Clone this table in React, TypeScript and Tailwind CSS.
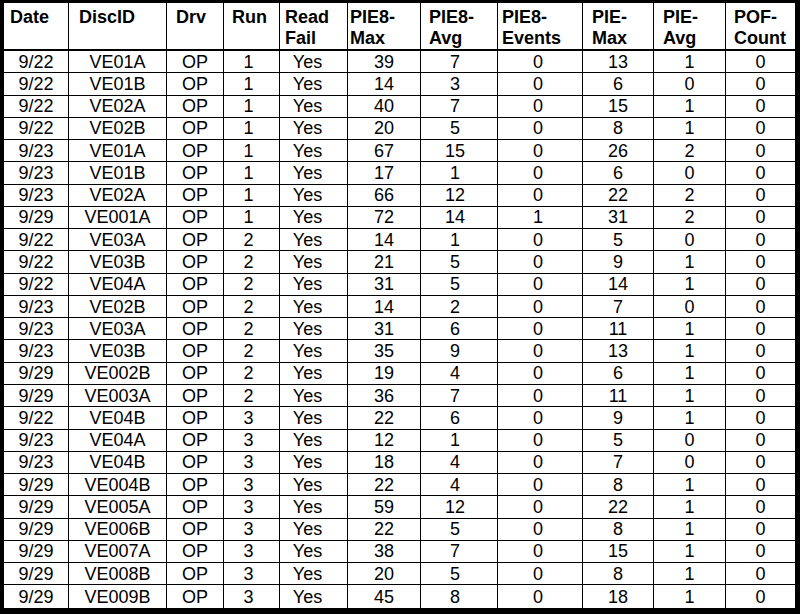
const cols = [
  { w: "w-[65px]", head: "pl-[6px]", cell: "" },
  { w: "w-[98px]", head: "pl-[10px]", cell: "" },
  { w: "w-[57px]", head: "pl-[9px]", cell: "" },
  { w: "w-[56px]", head: "pl-[8px]", cell: "pr-[6px]" },
  { w: "w-[68px]", head: "pl-[5px]", cell: "pr-[12px]" },
  { w: "w-[73px]", head: "pl-[2px]", cell: "" },
  { w: "w-[77px]", head: "pl-[8px]", cell: "pr-[8px]" },
  { w: "w-[85px]", head: "pl-[4px]", cell: "pr-[4px]" },
  { w: "w-[71px]", head: "pl-[9px]", cell: "" },
  { w: "w-[72px]", head: "pl-[9px]", cell: "" },
  { w: "w-[69px]", head: "pl-[8px]", cell: "" },
]

const headers = [
  ["Date"],
  ["DiscID"],
  ["Drv"],
  ["Run"],
  ["Read", "Fail"],
  ["PIE8-", "Max"],
  ["PIE8-", "Avg"],
  ["PIE8-", "Events"],
  ["PIE-", "Max"],
  ["PIE-", "Avg"],
  ["POF-", "Count"],
]

const rows: (string | number)[][] = [
  ["9/22", "VE01A", "OP", 1, "Yes", 39, 7, 0, 13, 1, 0],
  ["9/22", "VE01B", "OP", 1, "Yes", 14, 3, 0, 6, 0, 0],
  ["9/22", "VE02A", "OP", 1, "Yes", 40, 7, 0, 15, 1, 0],
  ["9/22", "VE02B", "OP", 1, "Yes", 20, 5, 0, 8, 1, 0],
  ["9/23", "VE01A", "OP", 1, "Yes", 67, 15, 0, 26, 2, 0],
  ["9/23", "VE01B", "OP", 1, "Yes", 17, 1, 0, 6, 0, 0],
  ["9/23", "VE02A", "OP", 1, "Yes", 66, 12, 0, 22, 2, 0],
  ["9/29", "VE001A", "OP", 1, "Yes", 72, 14, 1, 31, 2, 0],
  ["9/22", "VE03A", "OP", 2, "Yes", 14, 1, 0, 5, 0, 0],
  ["9/22", "VE03B", "OP", 2, "Yes", 21, 5, 0, 9, 1, 0],
  ["9/22", "VE04A", "OP", 2, "Yes", 31, 5, 0, 14, 1, 0],
  ["9/23", "VE02B", "OP", 2, "Yes", 14, 2, 0, 7, 0, 0],
  ["9/23", "VE03A", "OP", 2, "Yes", 31, 6, 0, 11, 1, 0],
  ["9/23", "VE03B", "OP", 2, "Yes", 35, 9, 0, 13, 1, 0],
  ["9/29", "VE002B", "OP", 2, "Yes", 19, 4, 0, 6, 1, 0],
  ["9/29", "VE003A", "OP", 2, "Yes", 36, 7, 0, 11, 1, 0],
  ["9/22", "VE04B", "OP", 3, "Yes", 22, 6, 0, 9, 1, 0],
  ["9/23", "VE04A", "OP", 3, "Yes", 12, 1, 0, 5, 0, 0],
  ["9/23", "VE04B", "OP", 3, "Yes", 18, 4, 0, 7, 0, 0],
  ["9/29", "VE004B", "OP", 3, "Yes", 22, 4, 0, 8, 1, 0],
  ["9/29", "VE005A", "OP", 3, "Yes", 59, 12, 0, 22, 1, 0],
  ["9/29", "VE006B", "OP", 3, "Yes", 22, 5, 0, 8, 1, 0],
  ["9/29", "VE007A", "OP", 3, "Yes", 38, 7, 0, 15, 1, 0],
  ["9/29", "VE008B", "OP", 3, "Yes", 20, 5, 0, 8, 1, 0],
  ["9/29", "VE009B", "OP", 3, "Yes", 45, 8, 0, 18, 1, 0],
]

export default function App() {
  return (
    <div className="h-[614px] w-[800px] border-t-[3px] border-r-[5px] border-b-[6px] border-l-4 border-black bg-white font-['Liberation_Sans',Arial,sans-serif] text-[18px] text-black">
      <div className="flex h-[48px] border-b-2 border-black">
        {headers.map((h, i) => (
          <div
            key={i}
            className={`${cols[i].w} ${cols[i].head} ${i < cols.length - 1 ? "border-r border-black" : ""} pt-[4px] font-bold leading-[21px]`}
          >
            {h.map((line) => (
              <div key={line}>{line}</div>
            ))}
          </div>
        ))}
      </div>
      {rows.map((r, ri) => (
        <div
          key={ri}
          className={`flex h-[22.28px] ${ri < rows.length - 1 ? "border-b border-black" : ""}`}
        >
          {r.map((v, i) => (
            <div
              key={i}
              className={`${cols[i].w} ${cols[i].cell} ${i < cols.length - 1 ? "border-r border-black" : ""} flex items-center justify-center leading-none`}
            >
              {v}
            </div>
          ))}
        </div>
      ))}
    </div>
  )
}
